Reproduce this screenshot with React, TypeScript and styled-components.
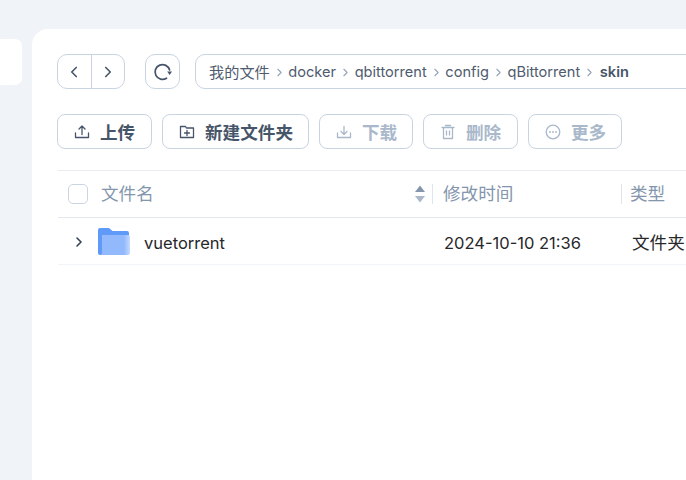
import React from 'react';
import styled, { createGlobalStyle } from 'styled-components';
import { ChevronLeft, ChevronRight } from 'lucide-react';

const GlobalStyle = createGlobalStyle`
  html, body {
    margin: 0;
    height: 100%;
    overflow: hidden;
    background: #f0f4f8;
    font-family: Inter, "Noto Sans CJK SC", sans-serif;
  }
`;

const Page = styled.div`
  display: flex;
  width: 686px;
  height: 480px;
  overflow: hidden;
`;

const SideStub = styled.div`
  flex: none;
  width: 22px;
  height: 46px;
  margin: 39px 10px 0 0;
  background: #fff;
  border-radius: 0 7px 7px 0;
`;

const Main = styled.main`
  flex: none;
  width: 654px;
  padding: 25px 0 0 25px;
  margin-top: 29px;
  box-sizing: border-box;
  background: #fff;
  border-radius: 16px 0 0 0;
`;

const TopBar = styled.div`
  display: flex;
  height: 35px;
`;

const NavGroup = styled.div`
  flex: none;
  display: flex;
  width: 68px;
  box-sizing: border-box;
  border: 1px solid #c9d4e2;
  border-radius: 10px;
  margin-right: 20px;
`;

const NavButton = styled.div<{ $divided?: boolean }>`
  flex: 1;
  display: flex;
  align-items: center;
  justify-content: center;
  color: #475569;
  border-left: ${(p) => (p.$divided ? '1px solid #c9d4e2' : 'none')};
`;

const RefreshButton = styled.div`
  flex: none;
  display: flex;
  align-items: center;
  justify-content: center;
  width: 35px;
  box-sizing: border-box;
  border: 1px solid #c9d4e2;
  border-radius: 10px;
  margin-right: 15px;
  color: #475569;
`;

const Breadcrumb = styled.div`
  flex: none;
  display: flex;
  align-items: center;
  width: 520px;
  box-sizing: border-box;
  padding-left: 13px;
  border: 1px solid #c9d4e2;
  border-radius: 10px;
  font-size: 14.6px;
  color: #4f5b6e;
  white-space: nowrap;
`;

const Crumb = styled.span<{ $current?: boolean; $cjk?: boolean }>`
  font-size: ${(p) => (p.$cjk ? '15.2px' : 'inherit')};
  font-weight: ${(p) => (p.$current ? 600 : 400)};
  color: ${(p) => (p.$current ? '#475569' : '#4f5b6e')};
  margin-top: ${(p) => (p.$cjk ? '-2px' : '0')};
  margin-left: ${(p) => (p.$current ? '1px' : '0')};
`;

const CrumbSep = styled(ChevronRight)`
  flex: none;
  width: 13px;
  height: 13px;
  margin: 1px 2.8px 0;
  color: #94a3b8;
`;

const ActionBar = styled.div`
  display: flex;
  gap: 10px;
  margin-top: 25px;
`;

const ActionButton = styled.div<{ $width: number; $disabled?: boolean }>`
  flex: none;
  display: flex;
  align-items: center;
  width: ${(p) => p.$width}px;
  height: 35px;
  box-sizing: border-box;
  padding-left: 16px;
  gap: 10px;
  border: 1px solid #c9d4e2;
  border-radius: 8px;
  font-size: 17.6px;
  font-weight: 700;
  white-space: nowrap;
  color: ${(p) => (p.$disabled ? '#a9b8cb' : '#475569')};
`;

const Table = styled.div`
  width: 628px;
  margin: 21px 0 0 1px;
  border-top: 1px solid #e7ecf3;
`;

const HeaderRow = styled.div`
  display: flex;
  align-items: center;
  height: 46px;
  border-bottom: 1px solid #e2e8f0;
  font-size: 17.6px;
  color: #8496ad;
  white-space: nowrap;
`;

const Checkbox = styled.div`
  flex: none;
  width: 20px;
  height: 20px;
  box-sizing: border-box;
  margin: 0 13px 0 10px;
  border: 1.5px solid #cbd5e1;
  border-radius: 5px;
`;

const NameHead = styled.div`
  flex: none;
  display: flex;
  align-items: center;
  justify-content: space-between;
  width: 332px;
  box-sizing: border-box;
  padding-right: 6px;
  border-right: 1px solid #dde4ec;
  line-height: 20px;
`;

const SortIcon = styled.svg`
  display: block;
  width: 12px;
  height: 20px;
`;

const TimeHead = styled.div`
  flex: none;
  width: 189px;
  box-sizing: border-box;
  padding-left: 10px;
  border-right: 1px solid #dde4ec;
  line-height: 20px;
`;

const TypeHead = styled.div`
  flex: none;
  padding-left: 8px;
  line-height: 20px;
`;

const FileRow = styled.div`
  display: flex;
  align-items: center;
  height: 46px;
  border-bottom: 1px solid #f1f4f8;
  font-size: 16.5px;
  color: #27272a;
  white-space: nowrap;
`;

const Expand = styled(ChevronRight)`
  flex: none;
  width: 16px;
  height: 16px;
  margin: 2px 11px 0 13px;
  color: #334155;
  stroke-width: 2.4;
`;

const FolderIcon = styled.svg`
  flex: none;
  width: 32px;
  height: 30px;
  margin: 2px 14px 0 0;
`;

const FileName = styled.div`
  flex: none;
  width: 300px;
  padding-top: 3px;
`;

const FileTime = styled.div`
  flex: none;
  width: 188px;
  padding-top: 3px;
`;

const FileType = styled.div`
  flex: none;
  font-size: 17.6px;
`;

const strokeProps = {
  fill: 'none',
  stroke: 'currentColor',
  strokeWidth: 1.3,
  strokeLinecap: 'round' as const,
  strokeLinejoin: 'round' as const,
};

const UploadIcon = () => (
  <svg width="16" height="16" viewBox="0 0 16 16" {...strokeProps}>
    <path d="M1.5 9v4.5h13V9M8 10.5V2.5M5 5l3-3 3 3" />
  </svg>
);

const NewFolderIcon = () => (
  <svg width="16" height="16" viewBox="0 0 16 16" {...strokeProps}>
    <path d="M1.5 2.5h5l1 1.5h7v9.5h-13zM8 6.5v5M5.5 9h5" />
  </svg>
);

const DownloadIcon = () => (
  <svg width="16" height="16" viewBox="0 0 16 16" {...strokeProps}>
    <path d="M1.5 9v4.5h13V9M8 2.5v8M5 7.5l3 3 3-3" />
  </svg>
);

const TrashIcon = () => (
  <svg width="16" height="16" viewBox="0 0 16 16" {...strokeProps}>
    <path d="M2 3.5h12M5.5 1.5h5M3.5 3.5v11h9v-11M6.5 7v4M9.5 7v4" />
  </svg>
);

const MoreIcon = () => (
  <svg width="16" height="16" viewBox="0 0 16 16" {...strokeProps}>
    <circle cx="8" cy="8" r="6.8" />
    <path d="M5 8h.01M8 8h.01M11 8h.01" strokeWidth={1.8} />
  </svg>
);

const RefreshIcon = () => (
  <svg width="20" height="20" viewBox="0 0 20 20">
    <path
      d="M13.5 16.2A7.4 7.4 0 1 1 16.6 8"
      fill="none"
      stroke="currentColor"
      strokeWidth="1.7"
      strokeLinecap="round"
    />
    <path d="M14.2 9.4h4.8l-2.4 3.6z" fill="currentColor" />
  </svg>
);

const path = ['docker', 'qbittorrent', 'config', 'qBittorrent'];

function App() {
  return (
    <Page>
      <GlobalStyle />
      <SideStub />
      <Main>
        <TopBar>
          <NavGroup>
            <NavButton>
              <ChevronLeft size={18} strokeWidth={2.2} />
            </NavButton>
            <NavButton $divided>
              <ChevronRight size={18} strokeWidth={2.2} />
            </NavButton>
          </NavGroup>
          <RefreshButton>
            <RefreshIcon />
          </RefreshButton>
          <Breadcrumb>
            <Crumb $cjk>我的文件</Crumb>
            <CrumbSep />
            {path.map((part) => (
              <React.Fragment key={part}>
                <Crumb>{part}</Crumb>
                <CrumbSep />
              </React.Fragment>
            ))}
            <Crumb $current>skin</Crumb>
          </Breadcrumb>
        </TopBar>

        <ActionBar>
          <ActionButton $width={95}>
            <UploadIcon />
            上传
          </ActionButton>
          <ActionButton $width={147}>
            <NewFolderIcon />
            新建文件夹
          </ActionButton>
          <ActionButton $width={94} $disabled>
            <DownloadIcon />
            下载
          </ActionButton>
          <ActionButton $width={95} $disabled>
            <TrashIcon />
            删除
          </ActionButton>
          <ActionButton $width={94} $disabled>
            <MoreIcon />
            更多
          </ActionButton>
        </ActionBar>

        <Table>
          <HeaderRow>
            <Checkbox />
            <NameHead>
              文件名
              <SortIcon viewBox="0 0 12 20">
                <path d="M6 1.5l5 6.5H1z" fill="#8496ad" />
                <path d="M6 18.5L1 12h10z" fill="#aab8c9" />
              </SortIcon>
            </NameHead>
            <TimeHead>修改时间</TimeHead>
            <TypeHead>类型</TypeHead>
          </HeaderRow>
          <FileRow>
            <Expand />
            <FolderIcon viewBox="0 0 32 30">
              <defs>
                <linearGradient id="folderFront" x1="0" x2="1" y1="0" y2="0">
                  <stop offset="0.8" stopColor="#93b9fd" />
                  <stop offset="1" stopColor="#c5daff" />
                </linearGradient>
              </defs>
              <path
                d="M2 1h9l3.5 3H29a2 2 0 0 1 2 2v3H0V3a2 2 0 0 1 2-2z"
                fill="#609af8"
              />
              <path d="M0 6h8v22H2a2 2 0 0 1-2-2z" fill="#609af8" />
              <path
                d="M4 8h26a2 2 0 0 1 2 2v16a2 2 0 0 1-2 2H2a2 2 0 0 0 2-2z"
                fill="url(#folderFront)"
              />
            </FolderIcon>
            <FileName>vuetorrent</FileName>
            <FileTime>2024-10-10 21:36</FileTime>
            <FileType>文件夹</FileType>
          </FileRow>
        </Table>
      </Main>
    </Page>
  );
}

export default App;
